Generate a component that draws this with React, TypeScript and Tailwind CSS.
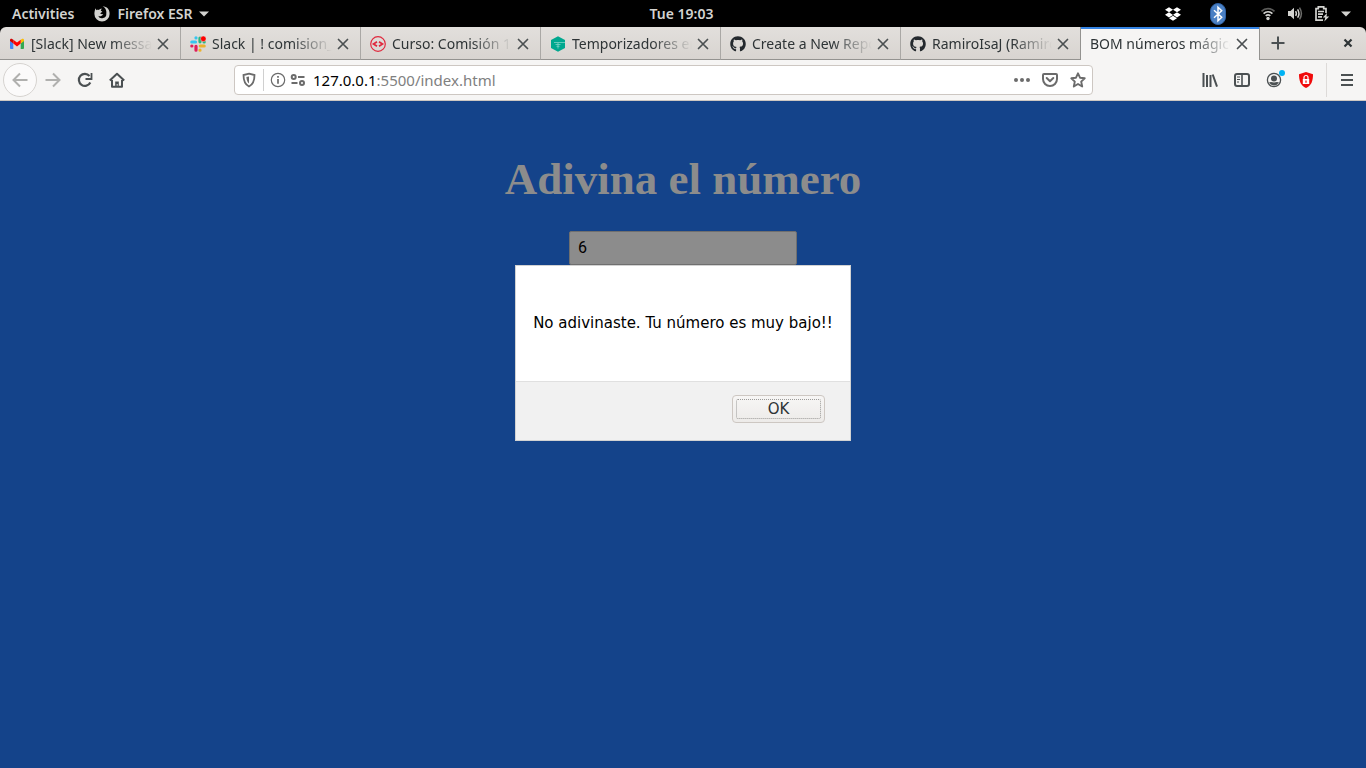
import type { ReactNode } from "react";
import { FaDropbox, FaGithub } from "react-icons/fa";

const uiFont = "font-['Noto_Sans',sans-serif]";

function FirefoxIcon() {
  return (
    <svg viewBox="0 0 16 16" className="size-4" fill="#d3d3d0" aria-hidden="true">
      <path d="M1.500 2.200C1 3.600 .4 5.500 .4 8A7.600 7.600 0 0 0 15.600 8C15.700 5.200 14.700 3.100 12.800 1.500C11.600 .7 9.800 .3 8.600 .4C10.500 1 11.300 2 11.600 3.200C12.300 4.300 12.500 6 12.300 7.500A4.300 4.300 0 0 1 4.100 9.700C5.200 10.400 6.600 10.500 7.600 9.700C8.500 9.100 9.300 9.200 9.200 8.600C8.800 7.900 7.500 8.400 6.500 7.700C6.200 7.100 6.500 6.800 8.200 6C8.300 5.400 7.300 5.100 6.800 4.800C7 3.700 7.500 3.200 8.200 2.800C6.600 2.600 5.400 3.300 4.800 4C4 3.700 3.300 3.700 2.600 4.200C2 3.700 1.700 3 1.500 2.200Z" />
    </svg>
  );
}

function GmailIcon() {
  return (
    <svg viewBox="0 0 16 16" className="size-4" aria-hidden="true">
      <path d="M1 4.500V12.200Q1 13 2 13H4.300V7.200L1 4.700Z" fill="#4285f4" />
      <path d="M11.700 7.200V13H14Q15 13 15 12.200V4.500Z" fill="#34a853" />
      <path d="M11.700 3.800V7.600L15 5V4.300C15 2.800 13.500 2.500 12.500 3.200Z" fill="#fbbc04" />
      <path d="M4.300 7.600V3.700L8 6.500L11.700 3.700V7.600L8 10.500Z" fill="#ff0000" />
      <path d="M1 4.300V5L4.300 7.600V3.700L3.500 3.200C2.500 2.500 1 2.800 1 4.300Z" fill="#d00000" />
    </svg>
  );
}

function SlackIcon() {
  return (
    <svg viewBox="0 0 16 16" className="size-4" aria-hidden="true">
      <g strokeWidth="3.200" strokeLinecap="round">
        <path d="M1.800 6H5.500M6 1.800V1.900" stroke="#36c5f0" />
        <path d="M10 2V5.800M14.200 6H14.100" stroke="#2eb67d" />
        <path d="M10.300 10H14.200M10 14.200V14.100" stroke="#ecb22e" />
        <path d="M6 10.300V14.200M1.800 10H1.900" stroke="#e01e5a" />
      </g>
      <circle cx="13.300" cy="2.800" r="2.800" fill="#ff0000" stroke="#dedbd8" strokeWidth=".5" />
    </svg>
  );
}

function CourseIcon() {
  return (
    <svg viewBox="0 0 16 16" className="size-4" fill="none" stroke="#e0293e" aria-hidden="true">
      <circle cx="8" cy="8" r="7.300" strokeWidth="1.200" />
      <path d="M7 5.800L3.500 8L7 10.200M9 5.800L12.500 8L9 10.200" strokeWidth="1.700" />
    </svg>
  );
}

function HexIcon() {
  return (
    <svg viewBox="0 0 16 16" className="size-4" aria-hidden="true">
      <path d="M8 .2L15 4V12L8 15.800L1 12V4Z" fill="#00a88f" />
      <path d="M4 6.500H15M5.500 8.500H10.500M6.500 10.300H9.500M8 6.500V12.500" stroke="#7fd3c7" strokeWidth=".8" />
    </svg>
  );
}

function CloseIcon({ bold = false }: { bold?: boolean }) {
  return (
    <svg viewBox="0 0 16 16" className="size-4" fill="none" stroke={bold ? "#2e3436" : "#4b5052"} aria-hidden="true">
      {bold ? (
        <path d="M4.500 4.500L11.500 11.500M11.500 4.500L4.500 11.500" strokeWidth="2.200" />
      ) : (
        <path d="M3.500 3.500L12.500 12.500M12.500 3.500L3.500 12.500" strokeWidth="1.700" strokeLinecap="round" />
      )}
    </svg>
  );
}

function BluetoothIcon() {
  return (
    <svg viewBox="0 0 16 22" className="h-[22px] w-4" fill="none" aria-hidden="true">
      <rect x=".5" y=".5" width="15" height="21" rx="7.500" fill="#4a80c4" stroke="#2f62a6" />
      <path d="M4 7.300L11.700 14.300L8 17.800V4.200L11.700 7.700L4 14.700" stroke="#fff" strokeWidth="1.500" />
    </svg>
  );
}

function WifiIcon() {
  return (
    <svg viewBox="0 0 16 16" className="size-4" fill="none" stroke="#d3d3d0" strokeWidth="1.700" aria-hidden="true">
      <path d="M1.500 5.300A9.300 9.300 0 0 1 14.500 5.300" stroke="#5c5c5a" />
      <path d="M3.600 7.600A6.200 6.200 0 0 1 12.400 7.600" />
      <path d="M5.700 9.900A3.300 3.300 0 0 1 10.300 9.900" />
      <circle cx="8" cy="12.500" r="1.700" fill="#d3d3d0" stroke="none" />
    </svg>
  );
}

function VolumeIcon() {
  return (
    <svg viewBox="0 0 16 16" className="size-4" fill="none" stroke="#d3d3d0" strokeWidth="1.500" aria-hidden="true">
      <path d="M1 5H3.500L7 1.700V13.300L3.500 10H1Z" fill="#d3d3d0" stroke="none" />
      <path d="M8.600 5.100Q10.200 7.500 8.600 9.900M10.600 3.300Q13.300 7.500 10.600 11.700" />
      <path d="M12.500 1.700Q16.300 7.500 12.500 13.300" stroke="#6c6c6a" />
    </svg>
  );
}

function BatteryIcon() {
  return (
    <svg viewBox="0 0 16 16" className="size-4" fill="none" stroke="#d3d3d0" strokeWidth="1.700" aria-hidden="true">
      <path d="M9 14.200H2V2.700H4.300V.9H9.700V2.700H12V7" />
      <path d="M4 5.500H10M4 8.200H9M4 10.900H8" />
      <path d="M13 7L8.800 11.500H11.300L10.300 15.500L15.200 10.500H12.500Z" fill="#d3d3d0" stroke="none" />
    </svg>
  );
}

function Caret() {
  return (
    <svg viewBox="0 0 10 6" className="h-[6px] w-[10px]" fill="#d3d3d0" aria-hidden="true">
      <path d="M0 .5H10L5 5.500Z" />
    </svg>
  );
}

function Glyph({ children, color = "#4b5052", width = 2 }: { children: ReactNode; color?: string; width?: number }) {
  return (
    <svg viewBox="0 0 16 16" className="size-4 shrink-0" fill="none" stroke={color} strokeWidth={width} aria-hidden="true">
      {children}
    </svg>
  );
}

type TabInfo = { title: string; icon?: ReactNode; active?: boolean };

const tabs: TabInfo[] = [
  { title: "[Slack] New messa", icon: <GmailIcon /> },
  { title: "Slack | ! comision_", icon: <SlackIcon /> },
  { title: "Curso: Comisión 17", icon: <CourseIcon /> },
  { title: "Temporizadores en", icon: <HexIcon /> },
  { title: "Create a New Repo", icon: <FaGithub className="size-4 text-[#24292e]" /> },
  { title: "RamiroIsaJ (Ramiro", icon: <FaGithub className="size-4 text-[#24292e]" /> },
  { title: "BOM números mágico", active: true },
];

function Tab({ title, icon, active }: TabInfo) {
  const look = active
    ? "border-x border-[#949390] bg-[#f6f5f4] shadow-[inset_0_2px_0_#3584e4]"
    : "border-b border-l border-b-[#949390] border-l-[#aaa8a5] pt-px first:border-l-0";
  return (
    <div className={`flex w-[180px] min-w-0 items-center gap-[6px] pr-[9px] pl-[9px] ${look}`}>
      {icon && <span className="shrink-0">{icon}</span>}
      <button
        type="button"
        role="tab"
        aria-selected={!!active}
        className="min-w-0 flex-1 overflow-hidden text-left text-[14px] leading-5 whitespace-nowrap text-[#2e3436] [mask-image:linear-gradient(to_left,transparent,black_40px)]"
      >
        {title}
      </button>
      <button type="button" aria-label={`Close ${title}`} className="-ml-[3px] shrink-0">
        <CloseIcon />
      </button>
    </div>
  );
}

function TopBar() {
  return (
    <header className="grid h-[27px] grid-cols-[1fr_auto_1fr] items-center bg-black pr-[15px] pl-3 text-[14px] leading-5 font-semibold text-[#d3d3d0]">
      <div className="flex items-center gap-5">
        <button type="button">Activities</button>
        <button type="button" className="flex items-center gap-[7px]">
          <FirefoxIcon />
          Firefox ESR
          <Caret />
        </button>
      </div>
      <time>Tue 19:03</time>
      <div className="flex items-center justify-end">
        <FaDropbox className="mr-[29px] size-4 text-white" />
        <span className="mr-[34px]">
          <BluetoothIcon />
        </span>
        <div className="flex items-center gap-[11px]">
          <WifiIcon />
          <VolumeIcon />
          <BatteryIcon />
          <Caret />
        </div>
      </div>
    </header>
  );
}

function TabStrip() {
  return (
    <div className="bg-black">
      <div className="flex h-[33px] overflow-hidden rounded-t-[6px] bg-linear-to-b from-[#e2dfdc] to-[#d8d4d0]">
        <div role="tablist" className="flex min-w-0">
          {tabs.map((tab) => (
            <Tab key={tab.title} {...tab} />
          ))}
        </div>
        <div className="flex flex-1 items-center justify-between border-b border-[#949390] pr-[10px] pl-[10px]">
          <button type="button" aria-label="New tab">
            <Glyph>
              <path d="M8 1.500V14.500M1.500 8H14.500" />
            </Glyph>
          </button>
          <button type="button" aria-label="Close window">
            <CloseIcon bold />
          </button>
        </div>
      </div>
    </div>
  );
}

function AddressBar() {
  return (
    <div className="flex h-[30px] w-[859px] min-w-0 items-center rounded-[4px] border border-[#cdc7c2] bg-white px-[6px]">
      <Glyph color="#6b6b6b" width={1.800}>
        <path d="M8 1.700L13.500 3C13.500 8 12.500 12.300 8 14.500C3.500 12.300 2.500 8 2.500 3Z" />
        <path d="M8 4.500V11.500C6.500 10.300 5.500 8 5.400 5Z" fill="#6b6b6b" stroke="none" />
      </Glyph>
      <span className="mx-[6px] h-[22px] w-px bg-[#d0d0d0]" />
      <Glyph color="#6b6b6b" width={1.200}>
        <circle cx="8" cy="8" r="6.700" />
        <path d="M8 7V11.800M8 4V5.700" strokeWidth="1.700" />
      </Glyph>
      <span className="ml-1 flex">
        <Glyph color="#6b6b6b" width={2}>
          <circle cx="3.700" cy="5" r="2" />
          <path d="M8 5H14.500M1.500 11H7.500" />
          <circle cx="12" cy="11" r="2" />
        </Glyph>
      </span>
      <a href="#" className="ml-[7px] flex-1 text-[15px] leading-5 text-[#808080]">
        <span className="text-black">127.0.0.1</span>:5500/index.html
      </a>
      <div className="flex items-center gap-3">
        <button type="button" aria-label="Page actions">
          <Glyph color="#6b6b6b">
            <g fill="#6b6b6b" stroke="none">
              <circle cx="2" cy="8" r="2" />
              <circle cx="8" cy="8" r="2" />
              <circle cx="14" cy="8" r="2" />
            </g>
          </Glyph>
        </button>
        <button type="button" aria-label="Save to Pocket">
          <Glyph color="#6b6b6b">
            <path d="M2 2H14Q15 2 15 3V7A7 7 0 0 1 1 7V3Q1 2 2 2ZM4.700 6L8 9.200L11.300 6" strokeLinecap="round" strokeLinejoin="round" />
          </Glyph>
        </button>
        <button type="button" aria-label="Bookmark this page">
          <Glyph color="#6b6b6b" width={1.900}>
            <path d="M8 1.300L10 5.700L14.700 6.300L11.200 9.600L12.200 14.500L8 12L3.800 14.500L4.800 9.600L1.300 6.300L6 5.700Z" strokeLinejoin="round" />
          </Glyph>
        </button>
      </div>
    </div>
  );
}

function Toolbar() {
  return (
    <nav className="flex h-[41px] items-center justify-between border-b border-[#cdc7c2] bg-[#f6f5f4] pr-[11px] pl-[3px]">
      <div className="flex items-center gap-4">
        <button type="button" aria-label="Back" className="-mr-2 flex size-[34px] items-center justify-center rounded-full border border-[#d6d3d0] bg-[#fbfafa]">
          <Glyph color="#b0b0ae">
            <path d="M15.500 8H1.500M8 1.500L1.500 8L8 14.500" />
          </Glyph>
        </button>
        <button type="button" aria-label="Forward">
          <Glyph color="#b0b0ae">
            <path d="M.5 8H14.500M8 1.500L14.500 8L8 14.500" />
          </Glyph>
        </button>
        <button type="button" aria-label="Reload">
          <Glyph width={2.200}>
            <path d="M13.300 10.500A6 6 0 1 1 12.500 4" />
            <path d="M14.500 1V7H8.500" strokeWidth="1.800" />
          </Glyph>
        </button>
        <button type="button" aria-label="Home">
          <Glyph>
            <path d="M.8 8.500L8 1.700L15.200 8.500M3 8V14.800H13V8" strokeLinejoin="round" />
            <path d="M6.200 9.500H9.800V15H6.200Z" fill="#4b5052" stroke="none" />
            <path d="M8.200 12.200V13.400" stroke="#f6f5f4" strokeWidth="1.200" />
          </Glyph>
        </button>
      </div>
      <AddressBar />
      <div className="flex items-center gap-4">
        <button type="button" aria-label="Library">
          <Glyph>
            <path d="M1.500 1V15M5 3V15M8.500 3V15M10.700 2.500L15 14.700" />
          </Glyph>
        </button>
        <button type="button" aria-label="Sidebars">
          <Glyph>
            <rect x="1" y="2" width="14" height="12" rx="2" />
            <path d="M8 2V14" strokeWidth="1.600" />
            <path d="M3 5H6M3 7.500H6M3 10H5" strokeWidth="1" />
          </Glyph>
        </button>
        <button type="button" aria-label="Account" className="relative">
          <Glyph width={1.300}>
            <circle cx="8" cy="8" r="6.600" />
            <circle cx="8" cy="6.500" r="3" fill="#4b5052" stroke="none" />
            <path d="M3 10.500Q4.500 9.500 8 10.500Q11.500 9.500 13 10.500Q11 13.400 8 13.400Q5 13.400 3 10.500Z" fill="#4b5052" stroke="none" />
          </Glyph>
          <span className="absolute -top-[2px] -right-[3px] size-[6px] rounded-full bg-[#00b3f4]" />
        </button>
        <button type="button" aria-label="Ad blocker">
          <Glyph>
            <path d="M8 0L15 2.300C15 9 13.500 13.500 8 16C2.500 13.500 1 9 1 2.300Z" fill="#f00a0a" stroke="none" />
            <rect x="4.800" y="7" width="6.400" height="5" fill="#fff" stroke="none" />
            <path d="M6 7V5.500A2 2 0 0 1 10 5.500V7" stroke="#fff" strokeWidth="1.200" />
            <path d="M8 8.500V10.700" stroke="#f00a0a" strokeWidth="1.200" />
          </Glyph>
        </button>
        <span className="-mx-1 h-[34px] w-px bg-[#dddad8]" />
        <button type="button" aria-label="Menu">
          <Glyph>
            <path d="M2 3H14M2 8H14M2 13H14" />
          </Glyph>
        </button>
      </div>
    </nav>
  );
}

function AlertDialog() {
  return (
    <div
      role="alertdialog"
      aria-labelledby="alert-text"
      className="w-[336px] border border-[#d2d2d2] bg-white font-['DejaVu_Sans',sans-serif] text-[15px] leading-5"
    >
      <p id="alert-text" className="px-4 pt-[47px] pb-12 text-center text-black">
        No adivinaste. Tu número es muy bajo!!
      </p>
      <div className="flex justify-end border-t border-[#e0e0e0] bg-[#f1f1f1] pt-[13px] pr-[25px] pb-[17px]">
        <button
          type="button"
          className="h-7 w-[93px] rounded-[4px] border border-[#cdc7c2] bg-linear-to-b from-[#f7f6f5] to-[#edebe9] p-[3px] text-[#2e3436]"
        >
          <span className="flex h-full items-center justify-center rounded-[2px] border border-dotted border-[#9a9a98]">OK</span>
        </button>
      </div>
    </div>
  );
}

function GamePage() {
  return (
    <main className="relative flex flex-1 flex-col items-center bg-[#14438a] pt-[52px]">
      <h1 className="font-['Liberation_Serif',serif] text-[45px] leading-[52px] font-bold text-[#8c8c8c]">Adivina el número</h1>
      <input
        type="text"
        aria-label="Número"
        defaultValue="6"
        className="mt-[26px] h-[34px] w-[228px] rounded-[2px] border border-[#6f6f6f] bg-[#8c8c8c] px-2 pb-[2px] font-['Roboto',sans-serif] text-[16px] text-black"
      />
      <div className="absolute inset-x-0 top-[164px] flex justify-center">
        <AlertDialog />
      </div>
    </main>
  );
}

export default function App() {
  return (
    <div className={`flex min-h-screen flex-col ${uiFont}`}>
      <TopBar />
      <TabStrip />
      <Toolbar />
      <GamePage />
    </div>
  );
}
